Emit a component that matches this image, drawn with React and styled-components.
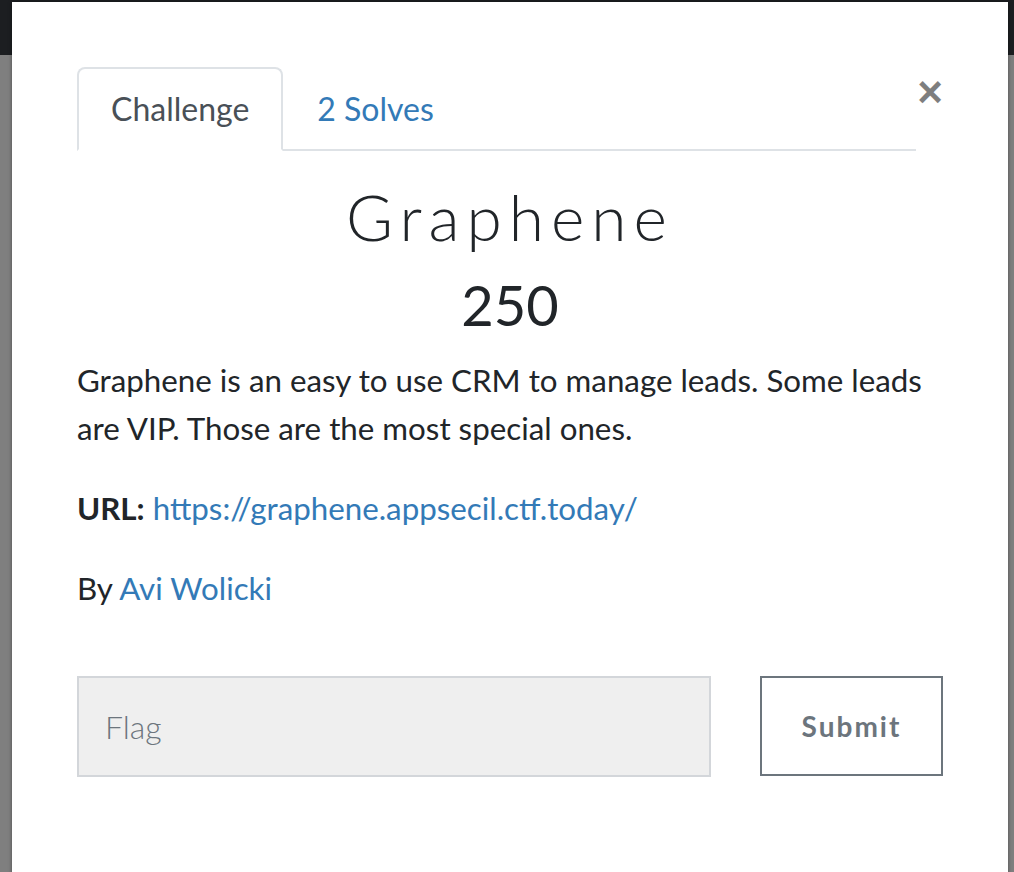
import React, { useState } from 'react';
import styled, { createGlobalStyle } from 'styled-components';

const GlobalStyle = createGlobalStyle`
    html, body {
        margin: 0;
        padding: 0;
        height: 100%;
        overflow: hidden;
    }
    body {
        background: #7f7f7f;
        font-family: Lato, "Liberation Sans", sans-serif;
    }
`

const Page = styled.div`
    position: relative;
    width: 1014px;
    height: 872px;
    background: #7f7f7f;
`

const NavBar = styled.div`
    height: 55px;
    background: #1c1e21;
`

const Modal = styled.div`
    position: absolute;
    top: 2px;
    left: 12px;
    width: 996px;
    height: 900px;
    box-sizing: border-box;
    background: #fff;
    padding: 65px;
    box-shadow: 0 0 4px rgba(0, 0, 0, 0.4);
`

const Header = styled.div`
    display: flex;
    align-items: flex-start;
`

const Tabs = styled.nav`
    display: flex;
    flex: 0 0 839px;
    border-bottom: 2px solid #dee2e6;
`

const Tab = styled.a`
    display: block;
    margin-bottom: -2px;
    padding: 16px 32px;
    font-size: 32px;
    line-height: 48px;
    text-decoration: none;
    cursor: pointer;
    border: 2px solid ${props => (props.$active ? '#dee2e6' : 'transparent')};
    border-bottom-color: ${props => (props.$active ? '#fff' : 'transparent')};
    border-radius: 8px 8px 0 0;
    background: ${props => (props.$active ? '#fff' : 'transparent')};
    color: ${props => (props.$active ? '#495057' : '#337ab7')};
`

const Close = styled.button`
    margin: 3px 0 0 auto;
    padding: 0;
    border: none;
    background: none;
    font-family: "Liberation Sans", Arial, sans-serif;
    font-size: 44px;
    font-weight: 700;
    line-height: 1;
    color: #000;
    opacity: 0.5;
    cursor: pointer;
`

const Title = styled.h2`
    margin: 28px 0 0 0;
    text-align: center;
    font-family: Lato, sans-serif;
    font-weight: 300;
    font-size: 64px;
    letter-spacing: 7px;
    line-height: 1.2;
    color: #212529;
`

const Value = styled.h3`
    margin: 15px 0 18px 0;
    text-align: center;
    font-weight: 400;
    font-size: 56px;
    line-height: 1.2;
    color: #212529;
`

const Text = styled.p`
    margin: 0 0 32px 0;
    font-size: 31.3px;
    line-height: 48px;
    color: #212529;
    strong {
        font-weight: 700;
    }
    a {
        color: #337ab7;
        text-decoration: none;
    }
`

const FlagRow = styled.form`
    display: flex;
    gap: 49px;
    margin-top: 64px;
`

const FlagInput = styled.input`
    flex: 0 0 634px;
    box-sizing: border-box;
    height: 101px;
    padding: 0 26px;
    border: 2px solid #d3d6da;
    background: #efefef;
    font-family: Lato, sans-serif;
    font-size: 32px;
    font-weight: 300;
    color: #495057;
    outline: none;
    &::placeholder {
        color: #6c757d;
    }
`

const SubmitButton = styled.button`
    flex: 0 0 183px;
    box-sizing: border-box;
    height: 100px;
    border: 2px solid #6c757d;
    background: #fff;
    font-family: Lato, sans-serif;
    font-size: 28px;
    font-weight: 700;
    letter-spacing: 2px;
    color: #6c757d;
    cursor: pointer;
`

export default function App () {
    const [tab, setTab] = useState('challenge');
    const [flag, setFlag] = useState('');
    return (
        <Page>
            <GlobalStyle/>
            <NavBar/>
            <Modal>
                <Header>
                    <Tabs>
                        <Tab $active={tab === 'challenge'} onClick={() => setTab('challenge')}>Challenge</Tab>
                        <Tab $active={tab === 'solves'} onClick={() => setTab('solves')}>2 Solves</Tab>
                    </Tabs>
                    <Close aria-label="Close">×</Close>
                </Header>
                <Title>Graphene</Title>
                <Value>250</Value>
                <Text>
                    Graphene is an easy to use CRM to manage leads. Some leads are VIP. Those are the most special ones.
                </Text>
                <Text>
                    <strong>URL:</strong> <a href="#">https://graphene.appsecil.ctf.today/</a>
                </Text>
                <Text>
                    By <a href="#">Avi Wolicki</a>
                </Text>
                <FlagRow onSubmit={e => e.preventDefault()}>
                    <FlagInput placeholder="Flag" value={flag} onChange={e => setFlag(e.target.value)}/>
                    <SubmitButton type="submit">Submit</SubmitButton>
                </FlagRow>
            </Modal>
        </Page>
    )
}
